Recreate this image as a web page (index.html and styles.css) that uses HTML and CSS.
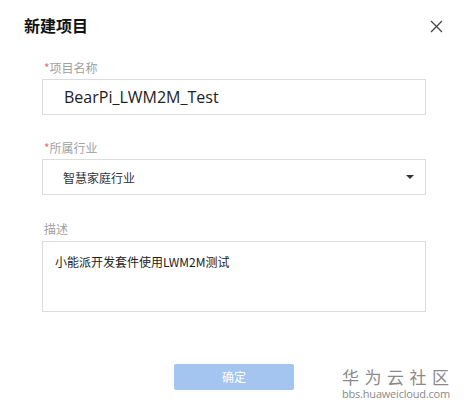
FILE: index.html
```html
<!DOCTYPE html>
<html lang="zh">
<head>
<meta charset="utf-8">
<link rel="stylesheet" href="styles.css">
</head>
<body>
<div class="dialog">
  <div class="header">
    <div class="title">新建项目</div>
    <svg class="close" width="13" height="13" viewBox="0 0 13 13"><path d="M1 1L12 12M12 1L1 12" stroke="#444" stroke-width="1.3" fill="none"/></svg>
  </div>
  <div class="form">
    <div class="label"><span class="req">*</span>项目名称</div>
    <div class="field input">BearPi_LWM2M_Test</div>
    <div class="label gap"><span class="req">*</span>所属行业</div>
    <div class="field select"><span>智慧家庭行业</span><span class="arrow"></span></div>
    <div class="label gap last">描述</div>
    <div class="field textarea">小能派开发套件使用LWM2M测试</div>
    <div class="actions"><div class="btn">确定</div></div>
  </div>
  <div class="watermark">
    <div class="wm-cn">华为云社区</div>
    <div class="wm-en">bbs.huaweicloud.com</div>
  </div>
</div>
</body>
</html>
```
FILE: styles.css
```css
html, body { margin: 0; padding: 0; background: #fff; }
body { font-family: "Noto Sans", "Noto Sans CJK SC", sans-serif; color: #252b3a; }
.dialog { position: relative; width: 464px; height: 408px; }
.header { display: flex; justify-content: space-between; align-items: center; padding: 17px 21px 0 24px; height: 16px; }
.title { font-size: 16px; line-height: 16px; font-weight: bold; color: #111; font-family: "Noto Sans CJK SC", sans-serif; }
.close { display: block; margin-top: 2px; }
.form { margin: 27px 38px 0 42px; display: flex; flex-direction: column; }
.label { font-size: 12px; line-height: 16px; color: #a0a0a0; margin-bottom: 3px; font-family: "Noto Sans CJK SC", sans-serif; padding-left: 2px; }
.label.gap { margin-top: 25px; }
.label.last { margin-top: 26px; margin-bottom: 4px; }
.req { color: #e0707a; }
.field { box-sizing: border-box; border: 1px solid #dcdcdc; background: #fff; }
.input { height: 36px; padding-left: 21px; font-size: 16px; line-height: 34px; color: #222; font-family: "Open Sans", sans-serif; }
.select { height: 36px; padding: 0 10px 0 20px; display: flex; align-items: center; justify-content: space-between; font-size: 12px; color: #333; font-family: "Noto Sans CJK SC", sans-serif; }
.arrow { width: 0; height: 0; border-left: 4.5px solid transparent; border-right: 4.5px solid transparent; border-top: 4px solid #333; margin-right: 1px; }
.textarea { height: 71px; padding: 11px 12px; font-size: 12px; line-height: 18px; color: #222; font-family: "Noto Sans CJK SC", sans-serif; }
.actions { display: flex; justify-content: center; margin-top: 52px; }
.btn { width: 120px; height: 26px; border-radius: 2px; background: #a3c5ef; color: #fff; font-size: 12px; line-height: 26px; text-align: center; font-family: "Noto Sans CJK SC", sans-serif; }
.watermark { position: absolute; left: 342px; top: 368px; color: #8a8a8a; }
.wm-cn { font-size: 17px; line-height: 18px; letter-spacing: 5.5px; font-family: "Noto Sans CJK SC", sans-serif; }
.wm-en { font-size: 11px; line-height: 12px; font-family: "Open Sans", sans-serif; margin-top: 2px; letter-spacing: -0.2px; }
```
